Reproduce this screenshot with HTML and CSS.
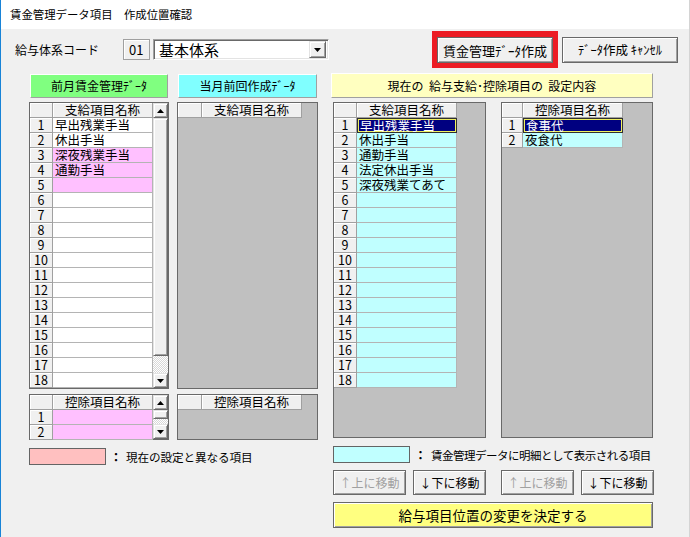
FILE: index.html
```html
<!DOCTYPE html>
<html lang="ja">
<head>
<meta charset="utf-8">
<title>賃金管理データ項目 作成位置確認</title>
<link rel="stylesheet" href="styles.css">
</head>
<body>
<div class="win">
  <div class="titlebar">賃金管理データ項目　作成位置確認</div>
  <div class="body">
    <div class="toprow">
      <span class="lbl">給与体系コード</span>
      <span class="codebox">01</span>
      <div class="combo">
        <span class="combo-text">基本体系</span>
        <span class="combo-btn"><svg width="7" height="4" viewBox="0 0 7 4"><path d="M0 0h7L3.5 4z" fill="#000"/></svg></span>
      </div>
      <div class="redframe"><button class="btn btn-create">賃金管理ﾃﾞｰﾀ作成</button></div>
      <button class="btn btn-cancel">ﾃﾞｰﾀ作成 ｷｬﾝｾﾙ</button>
    </div>

    <div class="panels">
      <!-- left column -->
      <div class="col col-left">
        <div class="hdrbtn green">前月賃金管理ﾃﾞｰﾀ</div>
        <div class="sheet sheet-lt">
          <div class="cells c23">
            <div class="hc"></div><div class="hc">支給項目名称</div>
            <div class="rn">1</div><div class="cell">早出残業手当</div>
            <div class="rn">2</div><div class="cell">休出手当</div>
            <div class="rn">3</div><div class="cell pink">深夜残業手当</div>
            <div class="rn">4</div><div class="cell pink">通勤手当</div>
            <div class="rn">5</div><div class="cell pink"></div>
            <div class="rn">6</div><div class="cell"></div>
            <div class="rn">7</div><div class="cell"></div>
            <div class="rn">8</div><div class="cell"></div>
            <div class="rn">9</div><div class="cell"></div>
            <div class="rn">10</div><div class="cell"></div>
            <div class="rn">11</div><div class="cell"></div>
            <div class="rn">12</div><div class="cell"></div>
            <div class="rn">13</div><div class="cell"></div>
            <div class="rn">14</div><div class="cell"></div>
            <div class="rn">15</div><div class="cell"></div>
            <div class="rn">16</div><div class="cell"></div>
            <div class="rn">17</div><div class="cell"></div>
            <div class="rn">18</div><div class="cell"></div>
          </div>
          <div class="vscroll">
            <span class="sb-btn"><svg width="7" height="4" viewBox="0 0 7 4"><path d="M3.5 0L7 4H0z" fill="#000"/></svg></span>
            <span class="sb-thumb thumb-lt"></span>
            <span class="sb-track"></span>
            <span class="sb-btn"><svg width="7" height="4" viewBox="0 0 7 4"><path d="M0 0h7L3.5 4z" fill="#000"/></svg></span>
          </div>
        </div>
        <div class="sheet sheet-lb">
          <div class="cells c23">
            <div class="hc"></div><div class="hc">控除項目名称</div>
            <div class="rn">1</div><div class="cell pink"></div>
            <div class="rn">2</div><div class="cell pink"></div>
          </div>
          <div class="vscroll">
            <span class="sb-btn"><svg width="7" height="4" viewBox="0 0 7 4"><path d="M3.5 0L7 4H0z" fill="#000"/></svg></span>
            <span class="sb-thumb thumb-lb"></span>
            <span class="sb-track"></span>
            <span class="sb-btn"><svg width="7" height="4" viewBox="0 0 7 4"><path d="M0 0h7L3.5 4z" fill="#000"/></svg></span>
          </div>
        </div>
        <div class="legend">
          <span class="swatch salmon"></span>
          <span class="colon">：</span>
          <span class="legend-text">現在の設定と異なる項目</span>
        </div>
      </div>

      <!-- middle column -->
      <div class="col col-mid">
        <div class="hdrbtn cyan">当月前回作成ﾃﾞｰﾀ</div>
        <div class="sheet sheet-mt">
          <div class="cells c24">
            <div class="hc"></div><div class="hc">支給項目名称</div>
          </div>
        </div>
        <div class="sheet sheet-mb">
          <div class="cells c24">
            <div class="hc"></div><div class="hc">控除項目名称</div>
          </div>
        </div>
      </div>

      <!-- right column -->
      <div class="col col-right">
        <div class="hdrbtn yellow">現在の&nbsp; 給与支給･控除項目の&nbsp; 設定内容</div>
        <div class="rgrids">
          <div class="sheet sheet-r1">
            <div class="cells c23">
              <div class="hc"></div><div class="hc">支給項目名称</div>
              <div class="rn">1</div><div class="cell sel">早出残業手当</div>
              <div class="rn">2</div><div class="cell cyanc">休出手当</div>
              <div class="rn">3</div><div class="cell cyanc">通勤手当</div>
              <div class="rn">4</div><div class="cell cyanc">法定休出手当</div>
              <div class="rn">5</div><div class="cell cyanc">深夜残業てあて</div>
              <div class="rn">6</div><div class="cell cyanc"></div>
              <div class="rn">7</div><div class="cell cyanc"></div>
              <div class="rn">8</div><div class="cell cyanc"></div>
              <div class="rn">9</div><div class="cell cyanc"></div>
              <div class="rn">10</div><div class="cell cyanc"></div>
              <div class="rn">11</div><div class="cell cyanc"></div>
              <div class="rn">12</div><div class="cell cyanc"></div>
              <div class="rn">13</div><div class="cell cyanc"></div>
              <div class="rn">14</div><div class="cell cyanc"></div>
              <div class="rn">15</div><div class="cell cyanc"></div>
              <div class="rn">16</div><div class="cell cyanc"></div>
              <div class="rn">17</div><div class="cell cyanc"></div>
              <div class="rn">18</div><div class="cell cyanc"></div>
            </div>
          </div>
          <div class="sheet sheet-r2">
            <div class="cells c21">
              <div class="hc"></div><div class="hc">控除項目名称</div>
              <div class="rn">1</div><div class="cell sel">食事代</div>
              <div class="rn">2</div><div class="cell cyanc">夜食代</div>
            </div>
          </div>
        </div>
        <div class="legend">
          <span class="swatch aqua"></span>
          <span class="colon">：</span>
          <span class="legend-text">賃金管理データに明細として表示される項目</span>
        </div>
        <div class="moverow">
          <button class="btn mv disabled">↑上に移動</button>
          <button class="btn mv">↓下に移動</button>
          <button class="btn mv disabled mv-gap">↑上に移動</button>
          <button class="btn mv">↓下に移動</button>
        </div>
        <button class="btn decide">給与項目位置の変更を決定する</button>
      </div>
    </div>
  </div>
</div>
</body>
</html>
```
FILE: styles.css
```css
* { box-sizing: border-box; }

body {
  margin: 0;
  width: 690px;
  height: 537px;
  overflow: hidden;
  background: #f0f0f0;
  color: #000;
  font-family: "Noto Sans CJK JP", "Noto Sans", sans-serif;
  font-size: 12px;
}

.win {
  width: 690px;
  height: 537px;
  border-left: 1px solid #1883d7;
  border-right: 1px solid #d4d4d4;
  display: flex;
  flex-direction: column;
}

.titlebar {
  height: 29px;
  background: #fff;
  padding-left: 9px;
  line-height: 28px;
  font-size: 11.4px;
  white-space: nowrap;
}

.body {
  flex: 1;
  background: #f0f0f0;
}

/* top row */
.toprow {
  display: flex;
  align-items: center;
  height: 41px;
  padding-left: 14px;
  padding-right: 11px;
}
.lbl {
  width: 108px;
  flex: none;
  font-size: 12px;
  line-height: 14px;
}
.codebox {
  width: 27px;
  height: 21px;
  flex: none;
  border: 1px solid #a0a0a0;
  box-shadow: inset 1px 1px #fff;
  background: #f0f0f0;
  font-size: 13px;
  line-height: 19px;
  padding-left: 5px;
}
.combo {
  margin-left: 3px;
  width: 176px;
  height: 21px;
  flex: none;
  background: #fff;
  border: 1px solid;
  border-color: #a0a0a0 #fff #fff #a0a0a0;
  box-shadow: inset 1px 1px #696969, inset -1px -1px #e3e3e3;
  display: flex;
  align-items: center;
  padding: 2px;
}
.combo-text {
  flex: 1;
  font-size: 15px;
  line-height: 17px;
  padding-left: 3px;
}
.combo-btn {
  width: 17px;
  height: 17px;
  background: #f0f0f0;
  border: 1px solid;
  border-color: #e3e3e3 #696969 #696969 #e3e3e3;
  box-shadow: inset 1px 1px #fff, inset -1px -1px #a0a0a0;
  display: flex;
  align-items: center;
  justify-content: center;
}

.btn {
  font-family: inherit;
  color: #000;
  background: #f0f0f0;
  border: 1px solid #696969;
  box-shadow: inset 1px 1px #fff, inset -1px -1px #a0a0a0;
  padding: 0;
  margin: 0;
  white-space: nowrap;
  flex: none;
}
.redframe {
  margin-left: auto;
  flex: none;
  border: 5px solid #ec1c24;
  border-top-width: 6px;
}
.btn-create {
  display: block;
  width: 116px;
  height: 26px;
  font-size: 13px;
}
.btn-cancel {
  margin-left: 4px;
  width: 116px;
  height: 26px;
  font-size: 12.5px;
}

/* panels */
.panels {
  display: flex;
  padding-left: 28px;
}
.col { display: flex; flex-direction: column; flex: none; }
.col-left { width: 140px; }
.col-mid { width: 141px; margin-left: 8px; }
.col-right { width: 323px; margin-left: 13px; }

.hdrbtn {
  margin: 4px 1px 0;
  height: 24px;
  border: 1px solid;
  border-color: #fff #a0a0a0 #a0a0a0 #fff;
  text-align: center;
  line-height: 22px;
  font-size: 12px;
  white-space: nowrap;
}
.col-right .hdrbtn { margin: 3px 0 0; height: 25px; line-height: 23px; width: 322px; }
.green { background: #80ff80; }
.cyan { background: #80ffff; }
.yellow { background: #ffffc0; }

.sheet {
  margin-top: 4px;
  border: 1px solid #696969;
  background: #c0c0c0;
  display: flex;
  align-items: flex-start;
  flex: none;
}
.cells {
  display: grid;
  grid-auto-rows: 15px;
}
.c23 { grid-template-columns: 23px 100px; }
.c24 { grid-template-columns: 24px 100px; }
.c21 { grid-template-columns: 21px 100px; }

.hc, .rn {
  background: #f0f0f0;
  border-right: 1px solid #a0a0a0;
  border-bottom: 1px solid #a0a0a0;
  box-shadow: inset 1px 1px #fff;
  text-align: center;
  font-size: 12.5px;
  line-height: 14px;
  white-space: nowrap;
}
.cell {
  background: #fff;
  border-right: 1px solid #b4b4b4;
  border-bottom: 1px solid #b4b4b4;
  padding-left: 2px;
  font-size: 12.5px;
  line-height: 14px;
  white-space: nowrap;
}
.cell.pink { background: #ffc0ff; }
.cell.cyanc { background: #c0ffff; }
.cell.sel {
  background: #000080;
  color: #fff;
  border: 1px solid #303030;
  box-shadow: inset 0 0 0 1px #f0f060;
  line-height: 13px;
  padding-left: 2px;
}

.sheet-lt { width: 140px; height: 287px; }
.sheet-lb { width: 140px; height: 46px; margin-top: 5px; }
.sheet-mt { width: 141px; height: 287px; }
.sheet-mb { width: 141px; height: 46px; margin-top: 5px; }
.sheet-r1 { width: 153px; height: 336px; margin-top: 0; }
.sheet-r2 { width: 152px; height: 336px; margin-top: 0; margin-left: 15px; }

.rgrids {
  display: flex;
  margin-top: 4px;
  padding-left: 2px;
}

.vscroll {
  width: 15px;
  align-self: stretch;
  display: flex;
  flex-direction: column;
  background: #f0f0f0;
}
.sb-btn, .sb-thumb {
  background: #f0f0f0;
  border: 1px solid;
  border-color: #e3e3e3 #696969 #696969 #e3e3e3;
  box-shadow: inset 1px 1px #fff, inset -1px -1px #a0a0a0;
}
.sb-btn {
  height: 15px;
  flex: none;
  display: flex;
  align-items: center;
  justify-content: center;
}
.thumb-lt { height: 238px; flex: none; }
.thumb-lb { height: 9px; flex: none; }
.sb-track {
  flex: 1;
  background: repeating-conic-gradient(#ffffff 0 25%, #d8d8d8 0 50%) 0 0 / 2px 2px;
}

/* legends */
.legend {
  display: flex;
  align-items: center;
  margin-top: 8px;
  height: 17px;
  white-space: nowrap;
}
.swatch {
  flex: none;
  width: 77px;
  height: 17px;
  border: 1px solid #646464;
}
.salmon { background: #ffc0c0; }
.aqua { background: #c0ffff; }
.colon {
  flex: none;
  width: 20px;
  text-align: center;
  font-size: 12px;
  font-weight: bold;
}
.legend-text { flex: none; font-size: 11.6px; letter-spacing: -0.1px; }
.col-right .legend { margin-left: 2px; }
.col-right .legend .colon { width: 21px; }
.col-right .legend-text { font-size: 11.5px; letter-spacing: -0.5px; }

.moverow {
  display: flex;
  margin-top: 7px;
  padding-left: 2px;
}
.mv {
  width: 73px;
  height: 25px;
  font-size: 12px;
  margin-right: 7px;
}
.mv:last-child { margin-right: 0; }
.mv-gap { margin-left: 8px; }
.mv.disabled { color: #a0a0a0; }

.decide {
  margin-top: 7px;
  margin-left: 2px;
  width: 320px;
  height: 26px;
  background: #ffff80;
  font-size: 13.5px;
}
```
